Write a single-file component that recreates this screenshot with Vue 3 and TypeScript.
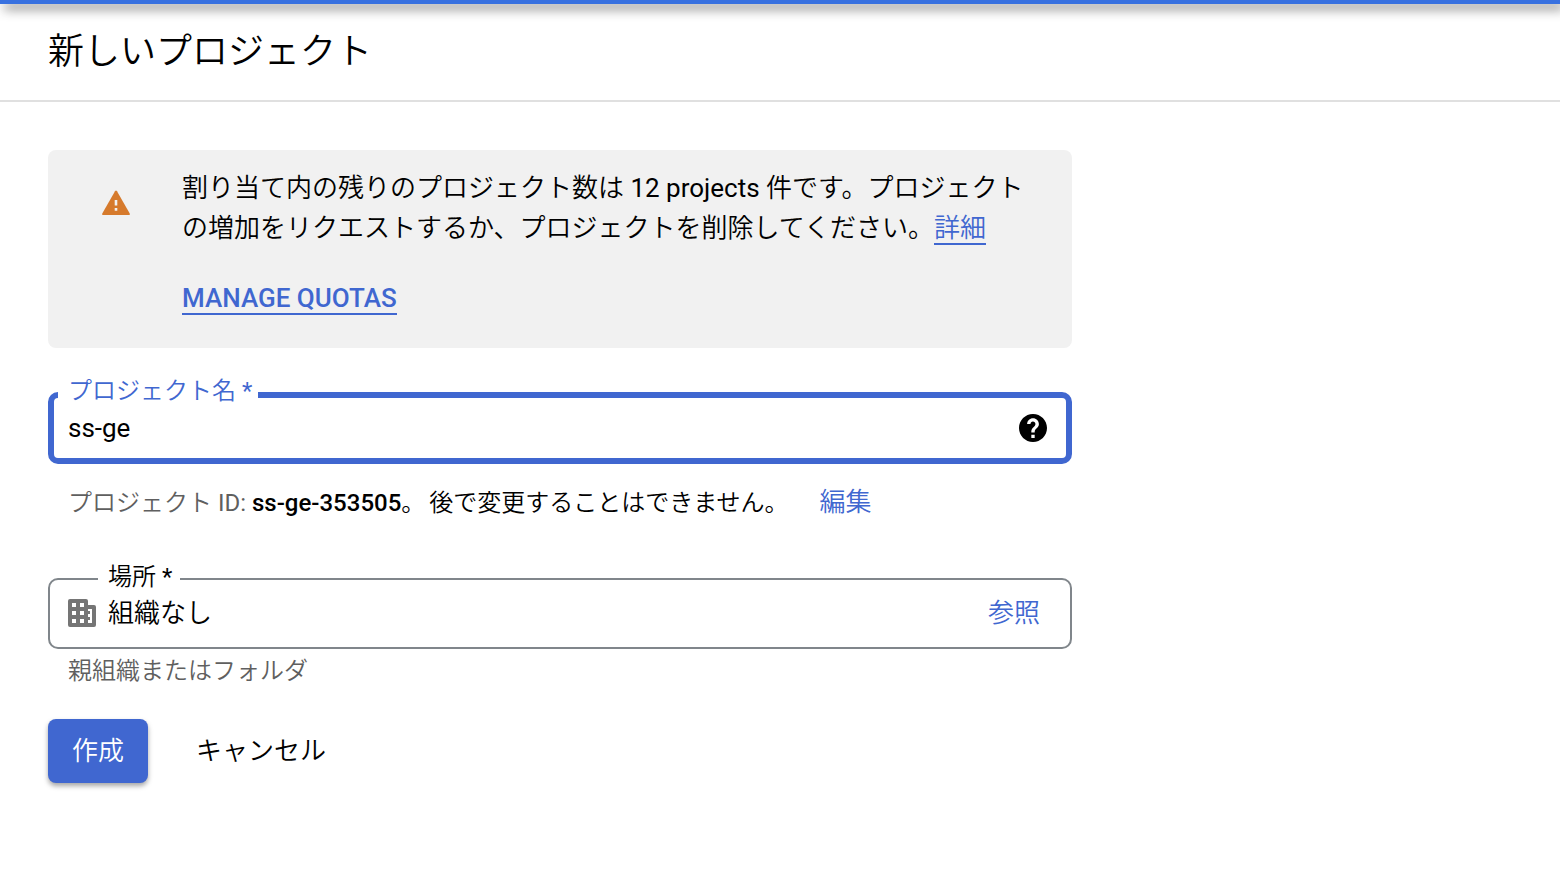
<script setup lang="ts">
import { ref } from 'vue'

const projectName = ref('ss-ge')
const projectId = ref('ss-ge-353505')
const location = ref('組織なし')
const remaining = ref(12)
</script>

<template>
  <div class="page">
    <div class="topbar"></div>
    <header class="header">
      <h1>新しいプロジェクト</h1>
    </header>

    <form class="content" @submit.prevent>
      <section class="notice">
        <svg class="warn" viewBox="0 0 28 26" aria-hidden="true">
          <path fill="#d67a2c" d="M13 1.2Q14 -.4 15 1.2L27.6 23.2Q28.4 25 26.6 25H1.4Q-.4 25 .4 23.2Z" />
          <path fill="#f1f1f1" d="M12.7 10h2.6v5.4h-2.6zM12.7 18h2.6v2.8h-2.6z" />
        </svg>
        <div class="notice-body">
          <p>
            割り当て内の残りのプロジェクト数は {{ remaining }} projects 件です。プロジェクトの増加をリクエストするか、プロジェクトを削除してください。<a href="#">詳細</a>
          </p>
          <p class="quotas"><a href="#">MANAGE QUOTAS</a></p>
        </div>
      </section>

      <div class="field focused">
        <label for="name">プロジェクト名 *</label>
        <input id="name" v-model="projectName" type="text" />
        <button class="help" type="button" aria-label="ヘルプ">
          <svg viewBox="2 2 20 20" aria-hidden="true">
            <path
              stroke="#000"
              stroke-width="0"
              d="M12 2C6.48 2 2 6.48 2 12s4.480 10 10 10 10-4.480 10-10S17.520 2 12 2zm1.200 17.200h-2.400v-2.400h2.400v2.400zm2.150-7.800l-.9.920C13.600 13.050 13.200 13.600 13.200 15.200h-2.400v-.6c0-1.100.450-2.100 1.170-2.830l1.240-1.260c.340-.340.540-.810.540-1.310 0-1-.8-1.800-1.800-1.800s-1.750.8-1.750 1.800H7.800c0-2.310 1.890-4.200 4.200-4.200s4.200 1.890 4.200 4.200c0 .880-.300 1.680-.850 2.200z"
            />
          </svg>
        </button>
      </div>

      <p class="project-id">
        <span class="muted">プロジェクト ID: </span><strong>{{ projectId }}。</strong>
        <span class="note">後で変更することはできません。</span>
        <button class="text-button edit" type="button">編集</button>
      </p>

      <div class="field place">
        <label for="location">場所 *</label>
        <svg class="building" viewBox="0 0 28 28" aria-hidden="true">
          <path
            fill-rule="evenodd"
            d="M2 0H18Q20 0 20 2V6H26Q28 6 28 8V26Q28 28 26 28H2Q0 28 0 26V2Q0 0 2 0ZM4 4V8H8V4ZM12 4V8H16V4ZM4 12V16H8V12ZM12 12V16H16V12ZM4 20V24H8V20ZM12 20V24H16V20ZM20 10V12H22V15H20V18H22V21H20V24H24V10Z"
          />
        </svg>
        <input id="location" v-model="location" type="text" readonly />
        <button class="text-button" type="button">参照</button>
      </div>
      <p class="hint">親組織またはフォルダ</p>

      <div class="actions">
        <button class="create" type="submit">作成</button>
        <button class="cancel" type="button">キャンセル</button>
      </div>
    </form>
  </div>
</template>

<style>
body {
  margin: 0;
  background: #fff;
}
</style>

<style scoped>
.page {
  color: #000;
  font-family: Roboto, "Noto Sans CJK JP DemiLight", "Noto Sans CJK JP Light", "Noto Sans CJK JP", sans-serif;
  font-size: 26px;
  line-height: 40px;
}
.topbar {
  height: 4px;
  background: #3871e0;
  box-shadow: 4px 4px 12px rgba(0, 0, 0, 0.8);
}
.header {
  padding: 22px 48px;
  border-bottom: 2px solid #e0e0e0;
}
h1 {
  margin: 0;
  font-size: 36px;
  font-weight: 400;
  line-height: 52px;
}
p {
  margin: 0;
}
.content {
  box-sizing: border-box;
  max-width: 1120px;
  padding: 48px;
}
.notice {
  display: flex;
  align-items: flex-start;
  gap: 52px;
  padding: 18px 46px 30px 54px;
  border-radius: 8px;
  background: #f1f1f1;
}
.warn {
  flex: none;
  width: 28px;
  height: 26px;
  margin-top: 22px;
}
.notice a {
  color: #4067d0;
  text-decoration: none;
  border-bottom: 2px solid #4067d0;
}
.quotas {
  margin-top: 30px;
  font-weight: 500;
}
.field {
  position: relative;
  box-sizing: border-box;
  display: flex;
  align-items: center;
  height: 72px;
  border: 2px solid #80868b;
  border-radius: 10px;
}
.field label {
  position: absolute;
  padding: 0 8px 0 10px;
  background: #fff;
  font-size: 24px;
  line-height: 28px;
}
.field input {
  flex: 1;
  min-width: 0;
  padding: 0;
  border: 0;
  outline: 0;
  background: none;
  color: inherit;
  font: inherit;
}
.focused {
  margin-top: 44px;
  padding: 0 19px 0 14px;
  border: 6px solid #4067d0;
}
.focused label {
  top: -21px;
  left: 4px;
  padding-right: 6px;
  color: #4067d0;
}
button {
  border: 0;
  background: none;
  color: inherit;
  font: inherit;
  cursor: pointer;
}
.help {
  display: flex;
  padding: 0;
}
.help svg {
  width: 28px;
  height: 28px;
}
.project-id {
  margin-top: 18px;
  padding-left: 20px;
  font-size: 24px;
}
.muted,
.hint {
  color: #5f5f5f;
}
strong {
  font-weight: 500;
}
.note {
  margin-left: 4px;
}
.text-button {
  padding: 0;
  color: #4067d0;
  font-size: 26px;
}
.edit {
  margin-left: 31px;
}
.place {
  height: 71px;
  margin-top: 55px;
  padding: 0 30px 2px 18px;
}
.place label {
  top: -17px;
  left: 48px;
}
.building {
  flex: none;
  width: 28px;
  height: 28px;
  margin-right: 12px;
  fill: #757575;
}
.hint {
  margin-top: 2px;
  padding-left: 20px;
  font-size: 24px;
}
.actions {
  display: flex;
  gap: 24px;
  margin-top: 28px;
}
.actions button {
  height: 64px;
  padding: 0 24px;
}
.create {
  border-radius: 8px;
  background: #4067d0;
  color: #fff;
  box-shadow: 0 3px 5px rgba(0, 0, 0, 0.35);
}
</style>
